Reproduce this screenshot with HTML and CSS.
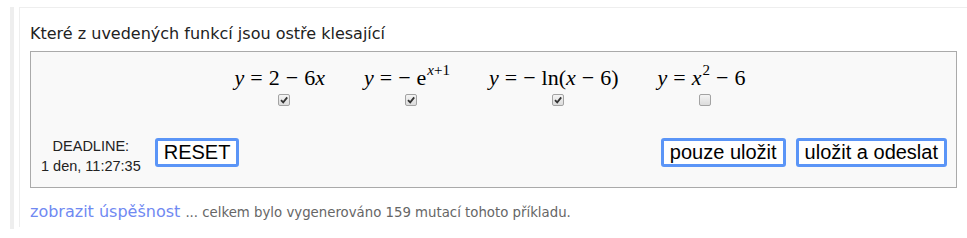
FILE: index.html
```html
<!DOCTYPE html>
<html lang="cs">
<head>
  <meta charset="UTF-8">
  <title>Příklad</title>
  <link rel="stylesheet" href="styles.css">
</head>
<body>
  <div class="wrap">
    <div class="card">
      <div class="question">Které z uvedených funkcí jsou ostře klesající</div>
      <div class="task">
        <div class="options">
          <div class="option">
            <span class="math"><i>y</i><span class="rel">=</span>2<span class="bin">−</span>6<i>x</i></span>
            <span class="cb checked"><svg viewBox="0 0 10 10"><path d="M2 5.2 L4.2 7.4 L8.2 2.4"/></svg></span>
          </div>
          <div class="option">
            <span class="math"><i>y</i><span class="rel">=</span><span class="neg">−</span>e<sup><i>x</i>+1</sup></span>
            <span class="cb checked"><svg viewBox="0 0 10 10"><path d="M2 5.2 L4.2 7.4 L8.2 2.4"/></svg></span>
          </div>
          <div class="option">
            <span class="math"><i>y</i><span class="rel">=</span><span class="neg">−</span>ln(<i>x</i><span class="bin">−</span>6)</span>
            <span class="cb checked"><svg viewBox="0 0 10 10"><path d="M2 5.2 L4.2 7.4 L8.2 2.4"/></svg></span>
          </div>
          <div class="option">
            <span class="math"><i>y</i><span class="rel">=</span><i>x</i><sup>2</sup><span class="bin">−</span>6</span>
            <span class="cb"></span>
          </div>
        </div>
        <div class="controls">
          <div class="deadline">DEADLINE:<br>1 den, 11:27:35</div>
          <button class="btn">RESET</button>
          <div class="spacer"></div>
          <button class="btn">pouze uložit</button>
          <button class="btn">uložit a odeslat</button>
        </div>
      </div>
      <div class="stats">
        <a href="#" class="link">zobrazit úspěšnost</a> <span class="note">... celkem bylo vygenerováno 159 mutací tohoto příkladu.</span>
      </div>
    </div>
  </div>
</body>
</html>
```

FILE: styles.css
```css
body {
  margin: 0;
  background: #fff;
  font-family: "DejaVu Sans", Verdana, sans-serif;
  color: #222;
}

.wrap {
  margin: 7px 0 0 10px;
  padding-left: 5px;
  border-left: 4px solid #eee;
  height: 222px;
}

.card {
  margin-top: 6px;
  border-top: 1px solid #eee;
  border-left: 1px solid #eee;
  padding: 10px 10px 0 10px;
  height: 209px;
}

.question {
  font-size: 16px;
  line-height: 20px;
  margin-top: 6px;
}

.task {
  margin-top: 7px;
  background: #f9f9f9;
  border: 1px solid #aaa;
  padding: 9px 9px 11px 10px;
}

.options {
  display: flex;
  justify-content: center;
  gap: 39px;
  padding-right: 8px;
}

.option {
  display: flex;
  flex-direction: column;
  align-items: center;
}

.math {
  font-family: "Liberation Serif", "Times New Roman", serif;
  font-size: 22px;
  line-height: 33px;
  white-space: nowrap;
  color: #000;
}

.math i {
  font-style: italic;
}

.math sup {
  font-size: 15px;
  line-height: 0;
  vertical-align: 10px;
  margin-left: 1px;
}

.rel {
  margin: 0 6px;
}

.bin {
  margin: 0 6px;
}

.neg {
  margin-right: 6px;
}

.cb {
  display: block;
  width: 10px;
  height: 10px;
  margin: 0 0 0 8px;
  border: 1px solid #a3a3a3;
  border-radius: 2px;
  background: linear-gradient(#f4f4f4, #dcdcdc);
}

.cb svg {
  display: block;
  width: 10px;
  height: 10px;
}

.cb path {
  fill: none;
  stroke: #333;
  stroke-width: 1.8;
}

.controls {
  display: flex;
  align-items: flex-start;
  margin-top: 30px;
}

.deadline {
  font-family: "Liberation Sans", Arial, sans-serif;
  font-size: 14.5px;
  line-height: 20px;
  text-align: center;
  margin-right: 14px;
}

.btn {
  font-family: "Liberation Sans", Arial, sans-serif;
  font-size: 20px;
  line-height: 23px;
  color: #000;
  background: #fff;
  border: 3px solid #5b95f7;
  border-radius: 3px;
  padding: 0 6px;
  margin: 2px 0 0 0;
}

.spacer {
  flex: 1;
}

.btn + .btn {
  margin-left: 10px;
}

.stats {
  margin-top: 13px;
  line-height: 22px;
}

.link {
  font-size: 16px;
  color: #7089f2;
  text-decoration: none;
}

.note {
  font-size: 13.3px;
  color: #666;
}
```
